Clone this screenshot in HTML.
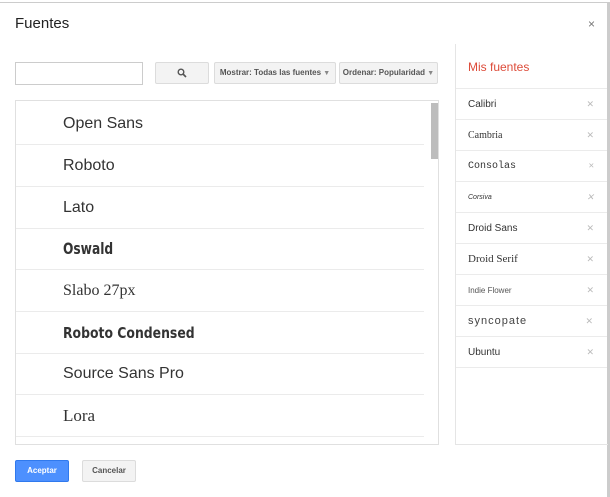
<!DOCTYPE html>
<html><head><style>
*{box-sizing:border-box;margin:0;padding:0}
body{width:610px;height:497px;background:#fff;font-family:"Liberation Sans",sans-serif;position:relative;overflow:hidden;color:#222}
.a{position:absolute}
.row{position:absolute;left:0;width:408px;height:42px;border-bottom:1px solid #ebebeb;padding-left:47px;line-height:42px;font-size:16px;color:#333}
.fr{position:absolute;left:0;width:151px;height:31px;border-bottom:1px solid #ebebeb;padding-left:12px;line-height:31px;font-size:10px;color:#333}
.fr span{position:absolute;right:13px;color:#bbb;font-size:9px}
.btn{position:absolute;height:22px;background:#f3f3f3;border:1px solid #dcdcdc;border-radius:2px;font-size:8px;font-weight:bold;color:#555;line-height:20px;text-align:center}
.btn i{font-style:normal;color:#888;font-size:7px}
</style></head><body>
<div class="a" style="left:0;top:2px;width:610px;height:1px;background:#ccc"></div>
<div class="a" style="left:607px;top:2px;width:3px;height:495px;background:#ccc"></div>
<div class="a" style="left:15px;top:15px;font-size:15px;color:#222">Fuentes</div>
<div class="a" style="left:588px;top:17px;font-size:12px;color:#777">×</div>
<div class="a" style="left:15px;top:62px;width:128px;height:23px;border:1px solid #ccc"></div>
<div class="btn" style="left:155px;top:62px;width:54px"><svg width="10" height="10" viewBox="0 0 10 10" style="margin-top:5px"><circle cx="4" cy="4" r="2.8" fill="none" stroke="#555" stroke-width="1.4"/><path d="M6 6L9 9" stroke="#555" stroke-width="1.6"/></svg></div>
<div class="btn" style="left:214px;top:62px;width:122px">Mostrar: Todas las fuentes <i>▼</i></div>
<div class="btn" style="left:339px;top:62px;width:99px">Ordenar: Popularidad <i>▼</i></div>
<div class="a" style="left:15px;top:100px;width:424px;height:345px;border:1px solid #e0e0e0;overflow:hidden">
<div class="row" style="top:2px">Open Sans</div>
<div class="row" style="top:44px">Roboto</div>
<div class="row" style="top:86px">Lato</div>
<div class="row" style="top:127px;font-weight:bold;font-family:'DejaVu Sans Condensed',sans-serif"><span style="display:inline-block;transform:scaleX(0.85);transform-origin:left">Oswald</span></div>
<div class="row" style="top:169px;font-family:'Liberation Serif',serif">Slabo 27px</div>
<div class="row" style="top:211px;font-weight:bold;font-family:'DejaVu Sans Condensed',sans-serif;font-size:15px"><span style="display:inline-block;transform:scaleX(0.92);transform-origin:left">Roboto Condensed</span></div>
<div class="row" style="top:252px;font-size:16px">Source Sans Pro</div>
<div class="row" style="top:294px;font-family:'Liberation Serif',serif;font-size:17px">Lora</div>
<div class="a" style="left:415px;top:2px;width:7px;height:56px;background:#bdbdbd"></div>
</div>
<div class="a" style="left:455px;top:44px;width:153px;height:401px;border-left:1px solid #e5e5e5;border-bottom:1px solid #e5e5e5">
<div class="a" style="left:12px;top:16px;font-size:12px;color:#dd4b39">Mis fuentes</div>
<div class="a" style="left:0;top:44px;width:151px;height:1px;background:#ebebeb"></div>
<div class="fr" style="top:45px">Calibri<span>✕</span></div>
<div class="fr" style="top:76px;font-family:'Liberation Serif',serif">Cambria<span>✕</span></div>
<div class="fr" style="top:107px;font-family:'Liberation Mono',monospace">Consolas<span>✕</span></div>
<div class="fr" style="top:138px;font-style:italic;font-size:7px">Corsiva<span>✕</span></div>
<div class="fr" style="top:169px">Droid Sans<span>✕</span></div>
<div class="fr" style="top:200px;font-family:'Liberation Serif',serif;font-size:11px">Droid Serif<span>✕</span></div>
<div class="fr" style="top:231px;font-size:8px;color:#555">Indie Flower<span>✕</span></div>
<div class="fr" style="top:262px;font-size:11px;letter-spacing:1px;color:#444">syncopate<span>✕</span></div>
<div class="fr" style="top:293px">Ubuntu<span>✕</span></div>
</div>
<div class="a" style="left:15px;top:460px;width:54px;height:22px;background:#4d90fe;border:1px solid #3079ed;border-radius:2px;color:#fff;font-size:8px;font-weight:bold;text-align:center;line-height:20px">Aceptar</div>
<div class="btn" style="left:82px;top:460px;width:54px">Cancelar</div>
</body></html>
